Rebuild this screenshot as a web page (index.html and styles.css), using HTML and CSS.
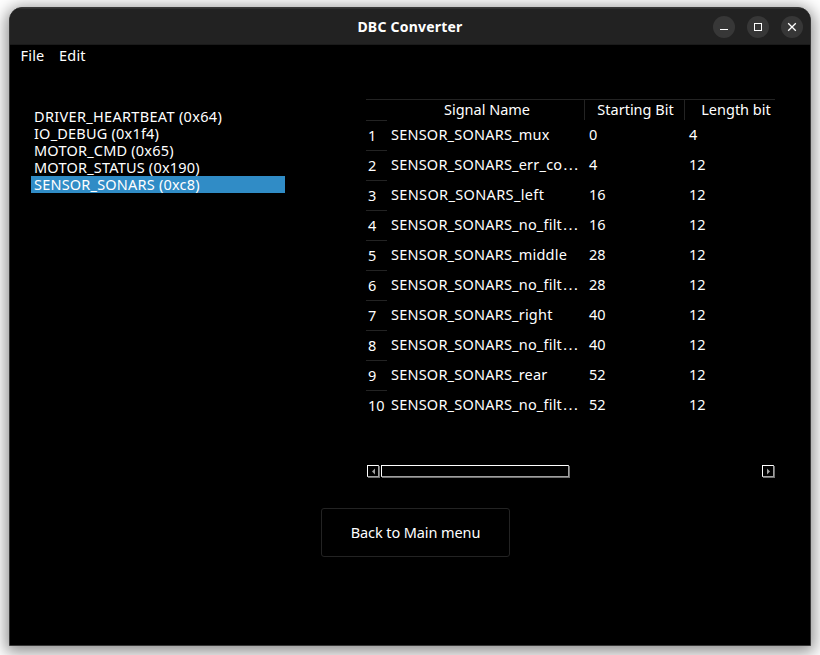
FILE: index.html
```html
<!DOCTYPE html>
<html lang="en">
<head>
<meta charset="utf-8">
<title>DBC Converter</title>
<link rel="stylesheet" href="styles.css">
</head>
<body>
<div class="window">
  <header class="titlebar">
    <h1 class="title">DBC Converter</h1>
    <div class="controls">
      <button class="control" aria-label="Minimize"><svg width="22" height="22" viewBox="0 0 22 22"><path d="M7 13.5h8" stroke="#fff"/></svg></button>
      <button class="control" aria-label="Maximize"><svg width="22" height="22" viewBox="0 0 22 22"><rect x="7.5" y="7.5" width="7" height="7" fill="none" stroke="#fff"/></svg></button>
      <button class="control" aria-label="Close"><svg width="22" height="22" viewBox="0 0 22 22"><path d="M7.2 7.2l7.6 7.6M14.8 7.2l-7.6 7.6" stroke="#fff" stroke-width="1.3"/></svg></button>
    </div>
  </header>
  <nav class="menubar"><span>File</span><span>Edit</span></nav>
  <main class="panes">
    <ul class="messages">
      <li class="wide">DRIVER_HEARTBEAT (0x64)</li>
      <li>IO_DEBUG (0x1f4)</li>
      <li>MOTOR_CMD (0x65)</li>
      <li>MOTOR_STATUS (0x190)</li>
      <li class="selected">SENSOR_SONARS (0xc8)</li>
    </ul>
    <section class="signals">
      <div class="head"><span class="corner"></span><span class="h-name">Signal Name</span><span class="h-start">Starting Bit</span><span class="h-length">Length bit</span></div>
      <div class="row"><span class="num">1</span><span class="name">SENSOR_SONARS_mux</span><span>0</span><span>4</span></div>
      <div class="row"><span class="num">2</span><span class="name cut">SENSOR_SONARS_err_co<i>…</i></span><span>4</span><span>12</span></div>
      <div class="row"><span class="num">3</span><span class="name left">SENSOR_SONARS_left</span><span>16</span><span>12</span></div>
      <div class="row"><span class="num">4</span><span class="name cut">SENSOR_SONARS_no_filt<i>…</i></span><span>16</span><span>12</span></div>
      <div class="row"><span class="num">5</span><span class="name">SENSOR_SONARS_middle</span><span>28</span><span>12</span></div>
      <div class="row"><span class="num">6</span><span class="name cut">SENSOR_SONARS_no_filt<i>…</i></span><span>28</span><span>12</span></div>
      <div class="row"><span class="num">7</span><span class="name">SENSOR_SONARS_right</span><span>40</span><span>12</span></div>
      <div class="row"><span class="num">8</span><span class="name cut">SENSOR_SONARS_no_filt<i>…</i></span><span>40</span><span>12</span></div>
      <div class="row"><span class="num">9</span><span class="name">SENSOR_SONARS_rear</span><span>52</span><span>12</span></div>
      <div class="row"><span class="num">10</span><span class="name cut">SENSOR_SONARS_no_filt<i>…</i></span><span>52</span><span>12</span></div>
      <div class="scrollbar">
        <span class="bevel arrow"><svg width="10" height="10" viewBox="0 0 10 10"><path d="M7 2.5v6L4 5.5z" fill="#a0a0a0"/></svg></span>
        <span class="bevel thumb"></span>
        <span class="bevel arrow end"><svg width="10" height="10" viewBox="0 0 10 10"><path d="M4 2.5v6l3-3z" fill="#a0a0a0"/></svg></span>
      </div>
    </section>
  </main>
  <button class="back">Back to Main menu</button>
</div>
</body>
</html>
```
FILE: styles.css
```css
* { box-sizing: border-box; }
body {
  margin: 0;
  height: 655px;
  padding: 7px 9px 9px;
  overflow: hidden;
  background: #fff;
  color: #fff;
  font: 14.5px/17px "Noto Sans", sans-serif;
}
.window {
  height: 639px;
  border: 1px solid #373737;
  border-radius: 13px 13px 0 0;
  background: #000;
  box-shadow: 0 3px 16px 3px rgba(0, 0, 0, 0.45);
  overflow: hidden;
}
.titlebar {
  display: grid;
  grid-template-columns: 1fr auto 1fr;
  align-items: center;
  height: 37px;
  background: #222;
  border-top: 1px solid #303030;
  border-bottom: 1px solid #1a1a1a;
}
.title { grid-column: 2; margin: 0; font-size: 14px; line-height: 20px; font-weight: 700; letter-spacing: 0.22px; }
.controls { display: flex; justify-content: flex-end; gap: 12px; padding-right: 7px; }
.control { width: 22px; height: 22px; padding: 0; border: 0; border-radius: 50%; background: #373737; }
.control svg { display: block; }
.menubar { display: flex; gap: 14.5px; height: 24px; padding: 2px 10.5px; letter-spacing: 0.2px; }
.panes { display: flex; height: 410px; padding: 30px 35px 0 21px; }
.messages { width: 254px; margin: 9px 81px 0 0; padding: 0; list-style: none; letter-spacing: 0.2px; }
.messages li { height: 17px; padding-left: 3px; white-space: nowrap; }
.messages .wide { letter-spacing: 0.32px; }
.messages .selected { background: #308cc6; }
.signals { width: 409px; }
.head, .row { display: grid; grid-template-columns: 21px 198px 100px 90px; white-space: nowrap; }
.head { height: 22px; border-top: 1px solid #232323; text-align: center; line-height: 19px; }
.head .corner { border-bottom: 1px solid #232323; }
.h-name, .h-start { height: 20px; border-right: 1px solid #232323; }
.h-name { padding-left: 3px; }
.h-start { padding-left: 2px; }
.h-length { padding-left: 12px; }
.row { height: 30px; line-height: 26px; }
.row span { padding-left: 4px; }
.row .name { letter-spacing: 0.21px; }
.row .left { letter-spacing: 0.35px; }
.cut i { font: normal 17px/1px "Liberation Sans", sans-serif; letter-spacing: 0; }
.row .num { height: 30px; padding-left: 2px; line-height: 28px; border-bottom: 1px solid #232323; }
.row:nth-child(11) .num { border-bottom: 0; }
.scrollbar { display: flex; gap: 2px; margin-top: 44px; padding: 0 1px; }
.bevel { height: 12px; border: 1px solid; border-color: #fff #a0a0a0 #a0a0a0 #fff; box-shadow: 1px 1px #707070; }
.arrow { width: 12px; }
.arrow svg { display: block; }
.thumb { width: 188px; }
.end { margin-left: auto; }
.back {
  display: block;
  width: 189px;
  height: 49px;
  margin: 29px 0 0 311px;
  padding: 0;
  border: 1px solid #232323;
  border-radius: 3px;
  background: #000;
  color: inherit;
  font: inherit;
  letter-spacing: -0.1px;
}
```
